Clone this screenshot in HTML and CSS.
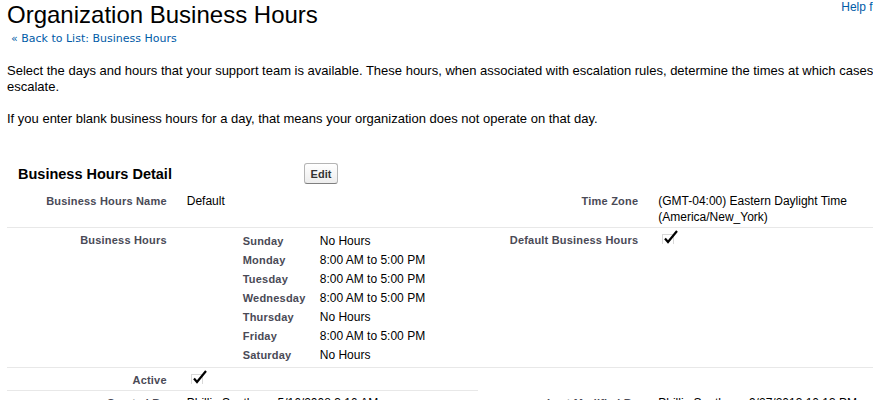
FILE: index.html
```html
<!DOCTYPE html>
<html lang="en">
<head>
<meta charset="UTF-8">
<meta name="viewport" content="width=device-width, initial-scale=1.0">
<title>Organization Business Hours</title>
<link rel="stylesheet" href="styles.css">
</head>
<body>
    <div class="page">
        <div class="page-head">
            <div>
                <h1 class="page-title">Organization Business Hours</h1>
                <a class="back-link" href="#">&laquo; Back to List: Business Hours</a>
            </div>
            <a class="help-link" href="#">Help for this Page <span class="help-icon">?</span></a>
        </div>

        <p class="intro first">Select the days and hours that your support team is available. These hours, when associated with escalation rules, determine the times at which cases escalate.</p>
        <p class="intro">If you enter blank business hours for a day, that means your organization does not operate on that day.</p>

        <div class="detail">
            <div class="detail-head">
                <h2 class="detail-title">Business Hours Detail</h2>
                <button class="btn">Edit</button>
            </div>

            <table class="detail-list">
                <colgroup>
                    <col class="w-label">
                    <col class="w-data">
                    <col class="w-label">
                    <col class="w-data">
                </colgroup>
                <tr>
                    <th class="label-col">Business Hours Name</th>
                    <td class="data-col">Default</td>
                    <th class="label-col">Time Zone</th>
                    <td class="data-col">(GMT-04:00) Eastern Daylight Time (America/New_York)</td>
                </tr>
                <tr>
                    <th class="label-col">Business Hours</th>
                    <td class="data-col">
                        <table class="days">
                            <tr><th class="day">Sunday</th><td class="hours">No Hours</td></tr>
                            <tr><th class="day">Monday</th><td class="hours">8:00 AM to 5:00 PM</td></tr>
                            <tr><th class="day">Tuesday</th><td class="hours">8:00 AM to 5:00 PM</td></tr>
                            <tr><th class="day">Wednesday</th><td class="hours">8:00 AM to 5:00 PM</td></tr>
                            <tr><th class="day">Thursday</th><td class="hours">No Hours</td></tr>
                            <tr><th class="day">Friday</th><td class="hours">8:00 AM to 5:00 PM</td></tr>
                            <tr><th class="day">Saturday</th><td class="hours">No Hours</td></tr>
                        </table>
                    </td>
                    <th class="label-col">Default Business Hours</th>
                    <td class="data-col">
                        <svg class="check" width="22" height="16" viewBox="0 0 22 16">
                            <rect x="4.5" y="6.5" width="11" height="11" fill="none" stroke="#b0b0b0" stroke-dasharray="1 1"/>
                            <path d="M7 10.5 L10 14 L19 3" fill="none" stroke="#000" stroke-width="2.2"/>
                        </svg>
                    </td>
                </tr>
                <tr>
                    <th class="label-col">Active</th>
                    <td class="data-col">
                        <svg class="check" width="22" height="16" viewBox="0 0 22 16">
                            <rect x="4.5" y="6.5" width="11" height="11" fill="none" stroke="#b0b0b0" stroke-dasharray="1 1"/>
                            <path d="M7 10.5 L10 14 L19 3" fill="none" stroke="#000" stroke-width="2.2"/>
                        </svg>
                    </td>
                    <td class="blank"></td>
                    <td class="blank"></td>
                </tr>
                <tr>
                    <th class="label-col">Created By</th>
                    <td class="data-col"><a class="user" href="#">Phillip Southern</a>, 5/16/2008 3:16 AM</td>
                    <th class="label-col">Last Modified By</th>
                    <td class="data-col"><a class="user" href="#">Phillip Southern</a>, 9/27/2013 10:13 PM</td>
                </tr>
            </table>
        </div>
    </div>
</body>
</html>
```

FILE: styles.css
```css
html, body {
    overflow: hidden;
}

body {
    font-family: Arial, "Liberation Sans", Helvetica, sans-serif;
    color: #000;
    background-color: #fff;
    margin: 0;
}

.page {
    width: 960px;
    padding: 0 0 0 7px;
}

.page-head {
    display: flex;
    justify-content: space-between;
    align-items: flex-start;
    width: 947px;
}

.page-title {
    margin: 1px 0 0;
    font-size: 24px;
    font-weight: normal;
    line-height: 28px;
}

.back-link {
    display: block;
    margin-top: 3px;
    padding-left: 4px;
    font-family: Verdana, "DejaVu Sans", sans-serif;
    font-size: 11px;
    line-height: 14px;
    color: #015ba7;
    text-decoration: none;
}

.help-link {
    font-size: 12px;
    line-height: 14px;
    color: #015ba7;
    text-decoration: none;
}

.help-icon {
    display: inline-block;
    width: 14px;
    height: 14px;
    border-radius: 50%;
    background-color: #e8a02c;
    color: #fff;
    font-weight: bold;
    font-size: 10px;
    text-align: center;
    line-height: 14px;
}

.intro {
    max-width: 895px;
    margin: 0 0 16px;
    font-size: 13px;
    line-height: 16px;
}

.intro.first {
    margin-top: 17px;
}

.detail {
    margin-top: 33px;
}

.detail-head {
    display: flex;
    align-items: center;
    height: 27px;
    margin-bottom: 2px;
    padding-left: 11px;
}

.detail-title {
    width: 286px;
    margin: 0;
    font-size: 14.5px;
    font-weight: bold;
}

.btn {
    width: 34px;
    height: 21px;
    padding: 0;
    font-family: Arial, "Liberation Sans", sans-serif;
    font-size: 11px;
    font-weight: bold;
    color: #333;
    border: 1px solid #b5b5b5;
    border-bottom-color: #7f7f7f;
    border-radius: 3px;
    background: linear-gradient(#ffffff, #ededed);
    cursor: pointer;
}

.detail-list {
    width: 943px;
    border-collapse: collapse;
    table-layout: fixed;
}

.w-label {
    width: 18%;
}

.w-data {
    width: 32%;
}

.label-col,
.data-col,
.blank {
    padding: 4px 10px 2px;
    line-height: 16px;
    vertical-align: top;
    border-bottom: 1px solid #e8e8e8;
}

.blank {
    border-bottom: none;
}

.label-col {
    text-align: right;
    font-size: 11px;
    letter-spacing: 0.2px;
    font-weight: bold;
    color: #4a4a56;
}

.data-col {
    text-align: left;
    font-size: 12px;
}

.check {
    display: block;
    margin-top: -4px;
}

.days {
    margin-left: 56px;
    border-collapse: collapse;
}

.day {
    width: 77px;
    padding: 0;
    text-align: left;
    font-size: 11px;
    letter-spacing: 0.2px;
    font-weight: bold;
    color: #4a4a56;
    line-height: 19px;
}

.hours {
    padding: 0;
    font-size: 12px;
    line-height: 19px;
}

.user {
    color: #000;
    text-decoration: none;
}
```
